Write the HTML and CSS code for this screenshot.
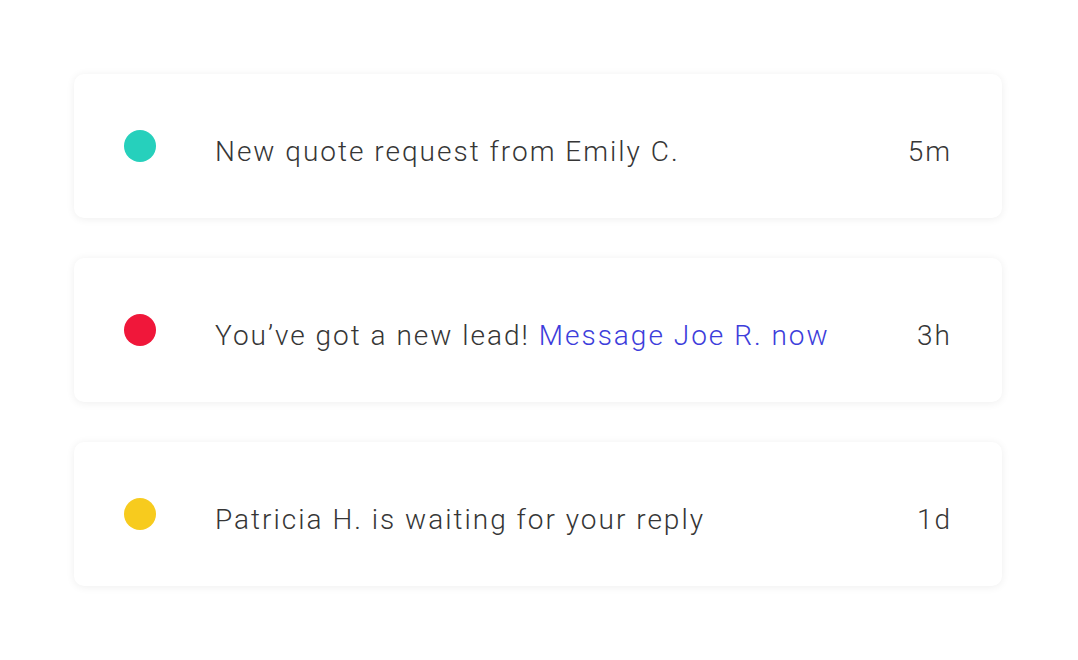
FILE: index.html
```html
<!DOCTYPE html>
<html>
<head>
<meta charset="utf-8">
<link rel="stylesheet" href="styles.css">
</head>
<body>
<div class="list">
  <div class="card">
    <span class="dot dot-teal"></span>
    <span class="msg">New quote request from Emily C.</span>
    <span class="time">5m</span>
  </div>
  <div class="card">
    <span class="dot dot-red"></span>
    <span class="msg">You’ve got a new lead! <a class="link" href="#">Message Joe R. now</a></span>
    <span class="time">3h</span>
  </div>
  <div class="card">
    <span class="dot dot-yellow"></span>
    <span class="msg">Patricia H. is waiting for your reply</span>
    <span class="time">1d</span>
  </div>
</div>
</body>
</html>
```

FILE: styles.css
```css
html, body {
  margin: 0;
  padding: 0;
  background: #ffffff;
}
body {
  width: 1078px;
  height: 660px;
  overflow: hidden;
  font-family: Roboto, "Liberation Sans", sans-serif;
}
.list {
  display: flex;
  flex-direction: column;
  gap: 40px;
  padding: 74px 76px 0 74px;
}
.card {
  display: flex;
  align-items: center;
  height: 144px;
  box-sizing: border-box;
  padding: 0 52px 0 50px;
  background: #ffffff;
  border-radius: 10px;
  box-shadow: 0 1px 8px rgba(0, 0, 0, 0.07);
}
.dot {
  flex: none;
  width: 32px;
  height: 32px;
  border-radius: 50%;
  margin-right: 59px;
}
.dot-teal { background: #26d0bc; }
.dot-red { background: #f0173a; }
.dot-yellow { background: #f7cb1e; }
.msg,
.time {
  font-size: 28px;
  font-weight: 300;
  color: #363636;
  letter-spacing: 2px;
  white-space: nowrap;
  margin-top: 10px;
}
.msg {
  flex: 1;
}
.time {
  flex: none;
  margin-right: -2px;
}
.link {
  color: #3d3ddb;
  text-decoration: none;
}
```
